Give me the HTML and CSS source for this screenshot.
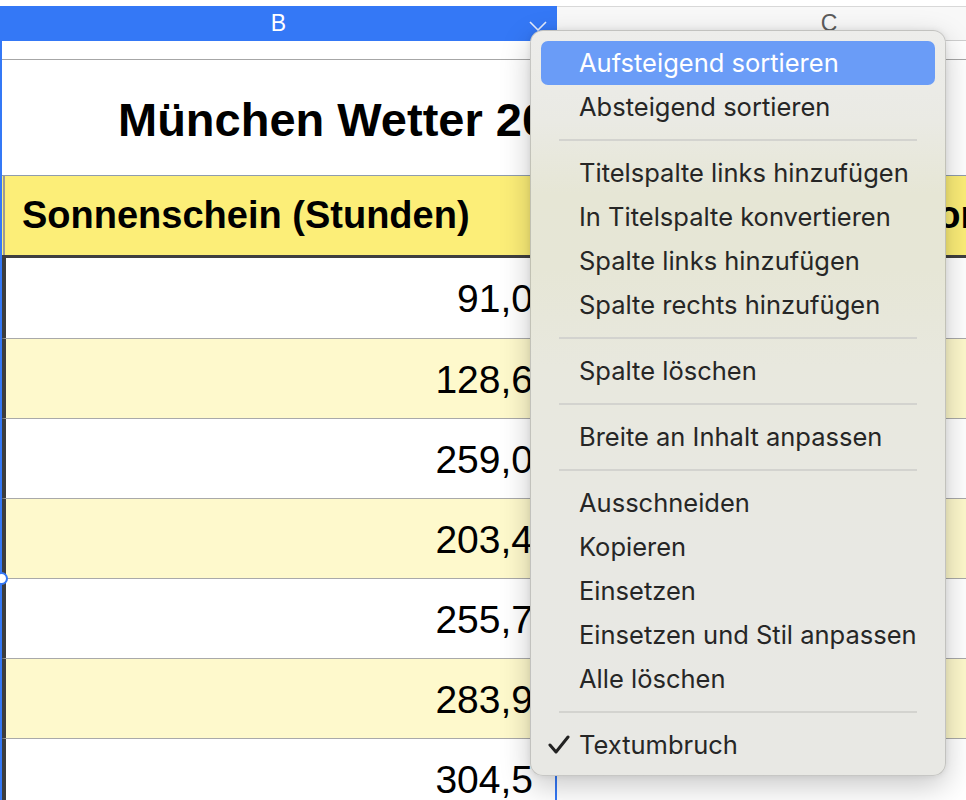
FILE: index.html
```html
<!DOCTYPE html>
<html lang="de">
<head>
<meta charset="utf-8">
<title>München Wetter</title>
<link rel="stylesheet" href="styles.css">
</head>
<body>
<div class="screen">
  <div class="topgap"></div>
  <div class="colheads">
    <div class="colhead colB">B
      <svg class="chev" width="18" height="10" viewBox="0 0 18 10"><polyline points="1,1 9,9 17,1" fill="none" stroke="#e4ecfc" stroke-width="1.6"/></svg>
    </div>
    <div class="colhead colC">C</div>
  </div>
  <div class="row spacer"><div class="cell b"></div><div class="cell c"></div></div>
  <div class="row title"><div class="cell merged">München Wetter 2022</div></div>
  <div class="row head"><div class="cell b hb">Sonnenschein (Stunden)</div><div class="cell c hc">Niederschlag (mm) Vorjahr</div></div>
  <div class="row data first"><div class="cell b db">91,0</div><div class="cell c"></div></div>
  <div class="row data alt"><div class="cell b db">128,6</div><div class="cell c"></div></div>
  <div class="row data"><div class="cell b db">259,0</div><div class="cell c"></div></div>
  <div class="row data alt"><div class="cell b db">203,4</div><div class="cell c"></div></div>
  <div class="row data"><div class="cell b db">255,7</div><div class="cell c"></div></div>
  <div class="row data alt"><div class="cell b db">283,9</div><div class="cell c"></div></div>
  <div class="row data"><div class="cell b db">304,5</div><div class="cell c"></div></div>

  <div class="selection"></div>
  <div class="handle"></div>

  <div class="menu">
    <div class="item active">Aufsteigend sortieren</div>
    <div class="item">Absteigend sortieren</div>
    <div class="sep"></div>
    <div class="item">Titelspalte links hinzufügen</div>
    <div class="item">In Titelspalte konvertieren</div>
    <div class="item">Spalte links hinzufügen</div>
    <div class="item">Spalte rechts hinzufügen</div>
    <div class="sep"></div>
    <div class="item">Spalte löschen</div>
    <div class="sep"></div>
    <div class="item">Breite an Inhalt anpassen</div>
    <div class="sep"></div>
    <div class="item">Ausschneiden</div>
    <div class="item">Kopieren</div>
    <div class="item">Einsetzen</div>
    <div class="item">Einsetzen und Stil anpassen</div>
    <div class="item">Alle löschen</div>
    <div class="sep"></div>
    <div class="item checked"><svg class="check" width="22" height="20" viewBox="0 0 22 20"><polyline points="2,10 8,17 20,2" fill="none" stroke="#222" stroke-width="3" stroke-linecap="round" stroke-linejoin="round"/></svg>Textumbruch</div>
  </div>
</div>
</body>
</html>
```
FILE: styles.css
```css
* { box-sizing: border-box; }
html, body { margin: 0; padding: 0; background: #ffffff; }
body { font-family: "Liberation Sans", Arial, sans-serif; color: #000; }

.screen {
  position: relative;
  width: 966px;
  height: 800px;
  overflow: hidden;
  background: #fff;
}

.topgap { height: 6px; }

.colheads { display: flex; height: 35px; }
.colhead {
  display: flex;
  align-items: center;
  justify-content: center;
  font-size: 23px;
  flex: none;
}
.colB {
  position: relative;
  width: 557px;
  background: #3478f6;
  color: #fff;
}
.colC {
  width: 544px;
  background: #f8f8f8;
  color: #5c5c5c;
  border-top: 1px solid #d8d8d8;
  border-bottom: 1px solid #cfcfcf;
}
.chev { position: absolute; right: 10px; top: 15px; }

.row { display: flex; }
.cell { flex: none; }
.cell.b { width: 557px; }
.cell.c { width: 544px; }

.spacer .cell { height: 19px; border-bottom: 1px solid #a6a6a6; }

.title .merged {
  width: 1101px;
  height: 116px;
  border-bottom: 1px solid #8f9cad;
  display: flex;
  align-items: center;
  padding-left: 118px;
  padding-top: 4px;
  font-weight: bold;
  font-size: 47px;
  white-space: nowrap;
}

.head .cell {
  height: 82px;
  background: #fcee78;
  border-bottom: 3px solid #3f3f3f;
  display: flex;
  align-items: center;
  font-weight: bold;
  font-size: 38px;
  white-space: nowrap;
  overflow: hidden;
}
.head .hb { padding-left: 22px; box-shadow: inset 3px 0 0 #fcee78, inset 5px 0 0 #9a9a9a; }
.head .hc { padding-left: 5px; }

.data .cell {
  height: 80px;
  border-bottom: 1px solid #a9a9a9;
  background: #fff;
}
.data.first .cell { height: 81px; }
.data.alt .cell { background: #fef9cc; }
.data .db {
  border-left: 6px solid #3d3d3d;
  display: flex;
  align-items: center;
  justify-content: flex-end;
  padding-right: 24px;
  padding-top: 2px;
  font-size: 39px;
}

.selection {
  position: absolute;
  left: 0;
  top: 41px;
  width: 557px;
  height: 770px;
  border-left: 2px solid #3478f6;
  border-right: 2px solid #3478f6;
}
.handle {
  position: absolute;
  left: -5px;
  top: 572px;
  width: 13px;
  height: 13px;
  border-radius: 50%;
  background: #fff;
  border: 2px solid #3478f6;
}

.menu {
  position: absolute;
  left: 530px;
  top: 30px;
  width: 416px;
  height: 746px;
  padding: 10px 10px 8px;
  border-radius: 13px;
  border: 1px solid rgba(0, 0, 0, 0.16);
  background: linear-gradient(to bottom,
    #ededeb 0%,
    #eaeae4 12%,
    #e6e6d5 22%,
    #e6e6d6 32%,
    #e8e8de 45%,
    #e8e8e3 70%,
    #e8e8e4 100%);
  box-shadow: 0 10px 30px rgba(0, 0, 0, 0.22), 0 0 6px rgba(0, 0, 0, 0.08);
  font-family: "Inter", "Liberation Sans", sans-serif;
  font-size: 25.5px;
  color: #262626;
}
.item {
  position: relative;
  height: 44px;
  line-height: 44px;
  padding-left: 38px;
  border-radius: 7px;
  white-space: nowrap;
}
.item.active { background: #6a9cf7; color: #fff; }
.sep {
  height: 22px;
  display: flex;
  align-items: center;
  padding: 0 18px;
}
.sep::before {
  content: "";
  display: block;
  width: 100%;
  height: 2px;
  background: #d3d3cf;
}
.check { position: absolute; left: 7px; top: 12px; }
```
